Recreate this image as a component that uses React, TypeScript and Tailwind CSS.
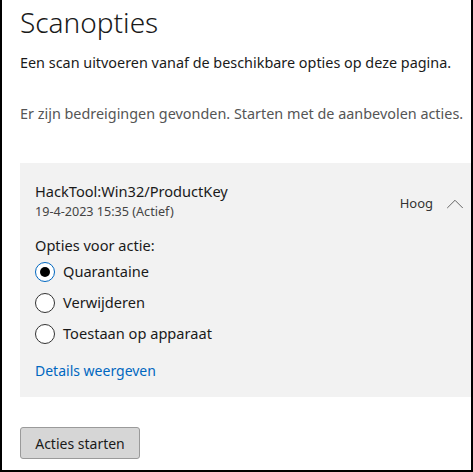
import { ChevronUp } from "lucide-react";

const FONT = { fontFamily: '"Noto Sans", "Open Sans", sans-serif' };

function Radio({ label, checked }: { label: string; checked?: boolean }) {
  return (
    <label className="flex items-center gap-2 h-[31px]">
      <span
        className={`flex h-[20px] w-[20px] items-center justify-center rounded-full border bg-white ${
          checked ? "border-[#0067c0]" : "border-[#333]"
        }`}
      >
        {checked && <span className="h-[10px] w-[10px] rounded-full bg-black" />}
      </span>
      <span className="text-[14.6px] text-[#1a1a1a]">{label}</span>
    </label>
  );
}

export default function App() {
  return (
    <div
      className="h-[472px] w-[473px] overflow-hidden border-x-2 border-b-2 border-black bg-white"
      style={FONT}
    >
      <div className="flex flex-col pl-[18px]">
        <h1 className="mt-[2px] text-[28px] font-light leading-[40px] text-[#1a1a1a]">
          Scanopties
        </h1>
        <p className="mt-[11px] text-[14.4px] leading-[20px] text-[#1a1a1a]">
          Een scan uitvoeren vanaf de beschikbare opties op deze pagina.
        </p>
        <p className="mt-[31px] text-[14.4px] leading-[20px] text-[#555]">
          Er zijn bedreigingen gevonden. Starten met de aanbevolen acties.
        </p>

        <section className="mt-[39px] h-[234px] bg-[#f2f2f2] pl-[15px] pr-px">
          <div className="flex items-start justify-between pt-[17px]">
            <div>
              <div className="text-[14.6px] leading-[22px] text-[#1a1a1a]">
                HackTool:Win32/ProductKey
              </div>
              <div className="text-[12.6px] leading-[20px] text-[#444]">
                19-4-2023 15:35 (Actief)
              </div>
            </div>
            <div className="mt-[9px] flex items-center gap-[7px] text-[13px] text-[#333]">
              <span>Hoog</span>
              <ChevronUp size={30} strokeWidth={0.8} className="text-[#666]" />
            </div>
          </div>
          <div className="mt-[12px] text-[14.6px] leading-[22px] text-[#1a1a1a]">
            Opties voor actie:
          </div>
          <div className="flex flex-col">
            <Radio label="Quarantaine" checked />
            <Radio label="Verwijderen" />
            <Radio label="Toestaan op apparaat" />
          </div>
          <a className="mt-[11px] block text-[14px] text-[#0067c0]">Details weergeven</a>
        </section>

        <button className="mt-[30px] h-[32px] w-[120px] rounded-[3px] border border-[#9a9a9a] bg-[#d6d6d6] text-[14px] text-[#1a1a1a]">
          Acties starten
        </button>
      </div>
    </div>
  );
}
